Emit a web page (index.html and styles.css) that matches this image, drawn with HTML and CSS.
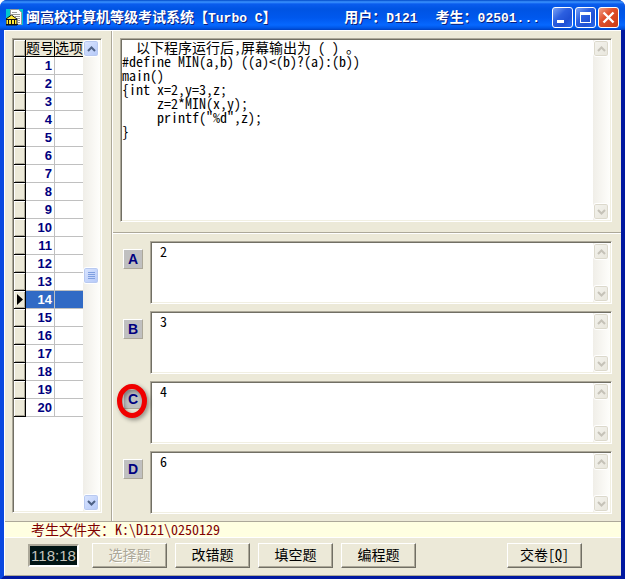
FILE: index.html
```html
<!DOCTYPE html>
<html lang="zh-CN">
<head>
<meta charset="utf-8">
<title>闽高校计算机等级考试系统【Turbo C】</title>
<link rel="stylesheet" href="styles.css">
</head>
<body>
<svg class="defs" width="0" height="0" aria-hidden="true">
  <symbol id="up" viewBox="0 0 9 6"><path d="M1 5 4.500 1.500 8 5" fill="none" stroke="currentColor" stroke-width="2"/></symbol>
  <symbol id="down" viewBox="0 0 9 6"><path d="M1 1 4.500 4.500 8 1" fill="none" stroke="currentColor" stroke-width="2"/></symbol>
</svg>
<div class="window">
  <header class="titlebar">
    <svg class="app-icon" viewBox="0 0 17 17" aria-hidden="true">
      <path d="M0 0h17v16H0z" fill="#00c8d0"/>
      <path d="M4.500 .5h8l3 3v12h-11z" fill="#fff" stroke="#999"/>
      <path d="M6 3.500h5M6 5.500h8M9 7.500h5M11 9.500h3M12 11.500h2M12 13.500h2" stroke="#999"/>
      <path d="M0 10 5.500 6 11 10v6H0z" fill="#ffe838" stroke="#111"/>
      <path d="M0 10.500h11M2.500 11v4M5.500 11v4M8.500 11v4M0 15.500h12" stroke="#111"/>
    </svg>
    <h1 class="title">闽高校计算机等级考试系统【<span class="latin">Turbo C</span>】</h1>
    <p class="session"><span>用户：<span class="latin">D121</span></span><span>考生：<span class="latin">02501...</span></span></p>
    <div class="caption-buttons">
      <button class="caption" aria-label="最小化"><svg viewBox="0 0 19 19"><path d="M4 12h7v3H4z" fill="#fff"/></svg></button>
      <button class="caption" aria-label="最大化"><svg viewBox="0 0 19 19"><path d="M4 4h11v11H4zM5 7v7h9V7z" fill="#fff" fill-rule="evenodd"/></svg></button>
      <button class="caption close" aria-label="关闭"><svg viewBox="0 0 19 19"><path d="m4.500 4.500 10 10m0-10-10 10" stroke="#fff" stroke-width="2.400"/></svg></button>
    </div>
  </header>

  <main class="client">
    <div class="work">
      <aside class="list-pane">
        <div class="sunken grid-box">
          <table class="grid">
            <thead><tr><th class="mark"></th><th class="num">题号</th><th class="opt">选项</th></tr></thead>
            <tbody>
              <tr><td class="mark"></td><td class="num">1</td><td class="opt"></td></tr>
              <tr><td class="mark"></td><td class="num">2</td><td class="opt"></td></tr>
              <tr><td class="mark"></td><td class="num">3</td><td class="opt"></td></tr>
              <tr><td class="mark"></td><td class="num">4</td><td class="opt"></td></tr>
              <tr><td class="mark"></td><td class="num">5</td><td class="opt"></td></tr>
              <tr><td class="mark"></td><td class="num">6</td><td class="opt"></td></tr>
              <tr><td class="mark"></td><td class="num">7</td><td class="opt"></td></tr>
              <tr><td class="mark"></td><td class="num">8</td><td class="opt"></td></tr>
              <tr><td class="mark"></td><td class="num">9</td><td class="opt"></td></tr>
              <tr><td class="mark"></td><td class="num">10</td><td class="opt"></td></tr>
              <tr><td class="mark"></td><td class="num">11</td><td class="opt"></td></tr>
              <tr><td class="mark"></td><td class="num">12</td><td class="opt"></td></tr>
              <tr><td class="mark"></td><td class="num">13</td><td class="opt"></td></tr>
              <tr class="current"><td class="mark"><svg class="pointer" viewBox="0 0 6 11"><path d="M0 0 6 5.500 0 11z"/></svg></td><td class="num">14</td><td class="opt"></td></tr>
              <tr><td class="mark"></td><td class="num">15</td><td class="opt"></td></tr>
              <tr><td class="mark"></td><td class="num">16</td><td class="opt"></td></tr>
              <tr><td class="mark"></td><td class="num">17</td><td class="opt"></td></tr>
              <tr><td class="mark"></td><td class="num">18</td><td class="opt"></td></tr>
              <tr><td class="mark"></td><td class="num">19</td><td class="opt"></td></tr>
              <tr><td class="mark"></td><td class="num">20</td><td class="opt"></td></tr>
            </tbody>
          </table>
          <div class="scroll active">
            <button class="arrow" aria-label="向上"><svg><use href="#up"/></svg></button>
            <button class="arrow thumb" aria-label="滚动"><svg viewBox="0 0 9 9"><path d="M1 1.500h7M1 3.500h7M1 5.500h7M1 7.500h7" stroke="#7f9fe0"/></svg></button>
            <button class="arrow" aria-label="向下"><svg><use href="#down"/></svg></button>
          </div>
        </div>
      </aside>

      <div class="exam-pane">
        <section class="question">
          <div class="sunken memo">
            <textarea class="text" readonly aria-label="题目">
  以下程序运行后,屏幕输出为 （ ） 。
#define MIN(a,b) ((a)&lt;(b)?(a):(b))
main()
{int x=2,y=3,z;
     z=2*MIN(x,y);
     printf("%d",z);
}</textarea>
            <div class="scroll">
              <button class="arrow" disabled aria-label="向上"><svg><use href="#up"/></svg></button>
              <button class="arrow" disabled aria-label="向下"><svg><use href="#down"/></svg></button>
            </div>
          </div>
        </section>
        <section class="answers">
          <div class="answer">
            <button class="letter" id="a">A</button>
            <div class="sunken memo"><textarea class="text" readonly aria-labelledby="a">2</textarea>
              <div class="scroll"><button class="arrow" disabled aria-label="向上"><svg><use href="#up"/></svg></button><button class="arrow" disabled aria-label="向下"><svg><use href="#down"/></svg></button></div></div>
          </div>
          <div class="answer">
            <button class="letter" id="b">B</button>
            <div class="sunken memo"><textarea class="text" readonly aria-labelledby="b">3</textarea>
              <div class="scroll"><button class="arrow" disabled aria-label="向上"><svg><use href="#up"/></svg></button><button class="arrow" disabled aria-label="向下"><svg><use href="#down"/></svg></button></div></div>
          </div>
          <div class="answer">
            <button class="letter" id="c">C<svg class="ring" viewBox="0 0 36 40"><ellipse cx="17" cy="19" rx="12.500" ry="14.500" fill="none" stroke="#f00000" stroke-width="5"/></svg></button>
            <div class="sunken memo"><textarea class="text" readonly aria-labelledby="c">4</textarea>
              <div class="scroll"><button class="arrow" disabled aria-label="向上"><svg><use href="#up"/></svg></button><button class="arrow" disabled aria-label="向下"><svg><use href="#down"/></svg></button></div></div>
          </div>
          <div class="answer">
            <button class="letter" id="d">D</button>
            <div class="sunken memo"><textarea class="text" readonly aria-labelledby="d">6</textarea>
              <div class="scroll"><button class="arrow" disabled aria-label="向上"><svg><use href="#up"/></svg></button><button class="arrow" disabled aria-label="向下"><svg><use href="#down"/></svg></button></div></div>
          </div>
        </section>
      </div>
    </div>

    <p class="folder">考生文件夹：K:\D121\0250129</p>

    <footer class="actions">
      <div class="timer">118:18</div>
      <button class="push" disabled>选择题</button>
      <button class="push">改错题</button>
      <button class="push">填空题</button>
      <button class="push">编程题</button>
      <button class="push submit">交卷[<u>Q</u>]</button>
    </footer>
  </main>
</div>
</body>
</html>
```
FILE: styles.css
```css
* { box-sizing: border-box; }
html, body { height: 100%; }
body {
  margin: 0;
  background: #fff;
  color: #000;
  font: 14px/14px "Noto Sans CJK SC", sans-serif;
  font-feature-settings: "hwid", "liga" 0;
  text-spacing-trim: space-all;
}
button, textarea { font: inherit; font-feature-settings: inherit; text-spacing-trim: inherit; margin: 0; padding: 0; }
h1, p { margin: 0; }
.defs { position: absolute; }

.window {
  display: flex;
  flex-direction: column;
  min-height: 100%;
  border: solid;
  border-width: 0 4px 4px;
  border-color: #0a48e0 #0018a0 #0018a0 #0a48e0;
  border-radius: 7px 7px 0 0;
  background: #0a48e0;
}

.titlebar {
  display: flex;
  align-items: center;
  height: 30px;
  margin: 0 -4px;
  padding: 4px 6px 0;
  border-radius: 7px 7px 0 0;
  background: linear-gradient(#0048c8 0, #3c94ff 2px, #0a5cee 4px, #0054e3 9px, #0058ee 18px, #0668ff 25px, #0056e6 28px, #0040c0);
  color: #fff;
  text-shadow: 1px 1px #0a1f80;
  font-weight: bold;
}
.app-icon { width: 17px; height: 17px; margin-right: 3px; }
.title { font-size: 14px; white-space: nowrap; }
.latin { font-family: "Liberation Mono", monospace; font-size: 13px; }
.session { display: flex; gap: 18px; margin-left: auto; white-space: nowrap; }
.caption-buttons { display: flex; gap: 2px; margin-left: 12px; }
.caption {
  display: block;
  width: 21px;
  height: 21px;
  border: 1px solid #fff;
  border-radius: 3px;
  background: linear-gradient(135deg, #7aa2f5, #2c5fe0 40%, #1f50d4 70%, #2a6cf0);
}
.caption svg { display: block; width: 19px; height: 19px; }
.close { background: linear-gradient(135deg, #f0a088, #e0502c 40%, #cc3c14); }

.client {
  display: flex;
  flex: 1;
  flex-direction: column;
  border: 1px solid;
  border-color: #fff #ece9d8 #aca899 #fff;
  border-right: 0;
  background: #ece9d8;
}
.work { display: flex; flex: 1; border-bottom: 1px solid #aca899; }
.list-pane { display: flex; padding: 7px 9px 8px 7px; border-right: 1px solid #aca899; }
.exam-pane { display: flex; flex: 1; flex-direction: column; min-width: 0; border-left: 1px solid #fff; }

.sunken {
  display: flex;
  border: 1px solid;
  border-color: #aca899 #fff #fff #aca899;
  background: #fff;
  box-shadow: inset 1px 1px #716f64, inset -1px -1px #f1efe2;
  padding: 1px;
}

.grid-box { width: 90px; }
.grid { flex: none; align-self: flex-start; width: 69px; table-layout: fixed; border-spacing: 0; }
.grid th, .grid td { padding: 0; height: 18px; line-height: 17px; }
.grid th { height: 17px; padding-bottom: 2px; line-height: 14px; font-weight: normal; white-space: nowrap; background: #ece9d8; border-right: 1px solid #000; border-bottom: 1px solid #000; }
.grid th.opt { border-right: 0; }
.grid .mark { width: 12px; background: #ece9d8; border-right: 1px solid #000; border-bottom: 1px solid #000; box-shadow: inset 1px 1px #fff, inset -1px -1px #aca899; }
.grid .num { width: 29px; }
td.num { border-right: 1px solid #c0c0c0; border-bottom: 1px solid #c0c0c0; color: #000080; font: bold 13px "Liberation Sans", sans-serif; text-align: right; }
.grid td.num { padding-right: 2px; }
td.opt { border-bottom: 1px solid #c0c0c0; }
.current .num, .current .opt { background: #316ac5; color: #fff; }
.pointer { display: block; width: 6px; height: 11px; margin-left: 3px; }

.scroll {
  display: flex;
  flex: none;
  flex-direction: column;
  justify-content: space-between;
  width: 17px;
  background: linear-gradient(90deg, #f0eee8, #fefefb);
}
.arrow {
  display: grid;
  place-items: center;
  width: 16px;
  height: 17px;
  border: 1px solid #fff;
  border-radius: 3px;
  background: linear-gradient(135deg, #f4f3ee, #e8e6dc);
  box-shadow: 0 0 0 1px #dcd9cc inset;
  color: #c5c2b8;
}
.arrow svg { width: 9px; height: 6px; }
.arrow.thumb svg { height: 9px; }
.active .arrow { background: linear-gradient(135deg, #dbe6ff, #b4c8f8); box-shadow: inset 0 0 0 1px #b8c9f0; color: #4d6185; }

.question { display: flex; height: 202px; padding: 7px 9px 10px 7px; border-bottom: 1px solid #aca899; }
.memo { flex: 1; min-width: 0; }
.text { flex: 1; min-width: 0; border: 0; background: none; color: #000; resize: none; overflow: hidden; outline: 0; }
.answers { display: flex; flex: 1; flex-direction: column; gap: 7px; padding: 7px 9px 7px 10px; border-top: 1px solid #fff; }
.answer { display: flex; flex: 1; gap: 7px; min-height: 63px; }
.answer .text { padding: 1px 8px; }
.letter {
  position: relative;
  width: 20px;
  height: 20px;
  margin-top: 8px;
  border: 1px solid;
  border-color: #fff #aca899 #aca899 #fff;
  background: #c0c0c0;
  color: #000080;
  font: bold 14px/16px "Liberation Sans", sans-serif;
}
.ring { position: absolute; left: -9px; top: -8px; width: 36px; height: 40px; filter: drop-shadow(2px 2px 2px #0006); }

.folder { height: 16px; padding-left: 26px; border-bottom: 1px solid #fff; background: #ffffe1; color: #800000; line-height: 14px; }

.actions { display: flex; align-items: center; gap: 8px; height: 37px; padding: 0 39px 2px 23px; }
.timer {
  width: 51px;
  height: 23px;
  margin-right: 5px;
  border: 2px solid;
  border-color: #aca899 #fff #fff #aca899;
  background: #001414;
  color: #c4c4bc;
  font: 15px/20px "Liberation Sans", sans-serif;
  text-align: center;
}
.push {
  width: 75px;
  height: 25px;
  padding-bottom: 3px;
  border: 1px solid;
  border-color: #fff #716f64 #716f64 #fff;
  background: #ece9d8;
  box-shadow: inset -1px -1px #aca899;
  color: #000;
}
.push:disabled { color: #aca899; text-shadow: 1px 1px #fff; }
.submit { margin-left: auto; }
```
